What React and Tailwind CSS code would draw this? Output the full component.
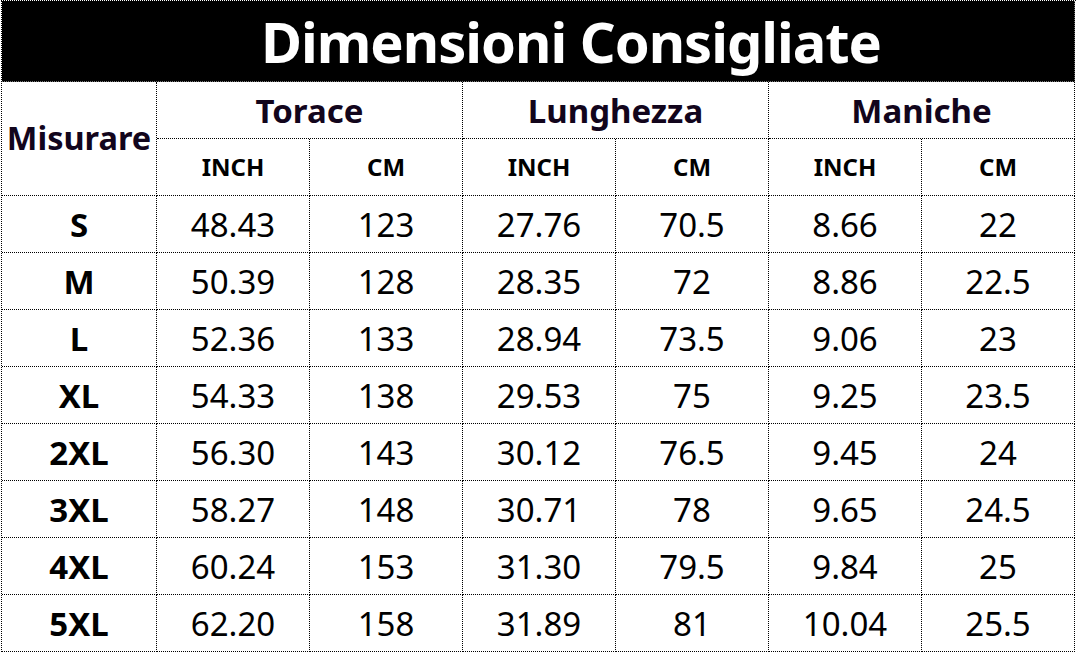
import React from "react";

const rows = [
  ["S", "48.43", "123", "27.76", "70.5", "8.66", "22"],
  ["M", "50.39", "128", "28.35", "72", "8.86", "22.5"],
  ["L", "52.36", "133", "28.94", "73.5", "9.06", "23"],
  ["XL", "54.33", "138", "29.53", "75", "9.25", "23.5"],
  ["2XL", "56.30", "143", "30.12", "76.5", "9.45", "24"],
  ["3XL", "58.27", "148", "30.71", "78", "9.65", "24.5"],
  ["4XL", "60.24", "153", "31.30", "79.5", "9.84", "25"],
  ["5XL", "62.20", "158", "31.89", "81", "10.04", "25.5"],
];

const cell =
  "flex items-center justify-center border-r border-b border-dotted border-black leading-none";

export default function App() {
  return (
    <div
      className="w-[1076px] h-[653px] bg-white overflow-hidden"
      style={{ fontFamily: '"Noto Sans", "Open Sans", sans-serif' }}
    >
      <div className="ml-[1px] grid grid-cols-[155px_repeat(6,153px)] grid-rows-[81px_repeat(10,57px)] border-l border-t border-dotted border-black text-black">
        <div className="col-span-7 flex items-center justify-center bg-black border-r border-b border-dotted border-[#777] pl-[66px]">
          <span className="text-white font-bold text-[56px] leading-none tracking-[-1px]">
            Dimensioni Consigliate
          </span>
        </div>

        <div className={`${cell} row-span-2 text-[32.5px] font-bold text-[#12051c]`}>
          Misurare
        </div>
        <div className={`${cell} col-span-2 text-[33px] font-bold text-[#12051c]`}>
          Torace
        </div>
        <div className={`${cell} col-span-2 text-[33px] font-bold text-[#12051c]`}>
          Lunghezza
        </div>
        <div className={`${cell} col-span-2 text-[33px] font-bold text-[#12051c]`}>
          Maniche
        </div>
        {["INCH", "CM", "INCH", "CM", "INCH", "CM"].map((t, i) => (
          <div key={i} className={`${cell} text-[24px] font-bold`}>
            {t}
          </div>
        ))}

        {rows.map((r) =>
          r.map((v, j) => (
            <div
              key={r[0] + j}
              className={`${cell} text-[33px] ${j === 0 ? "font-bold" : "font-normal"}`}
            >
              {v}
            </div>
          ))
        )}
      </div>
    </div>
  );
}
